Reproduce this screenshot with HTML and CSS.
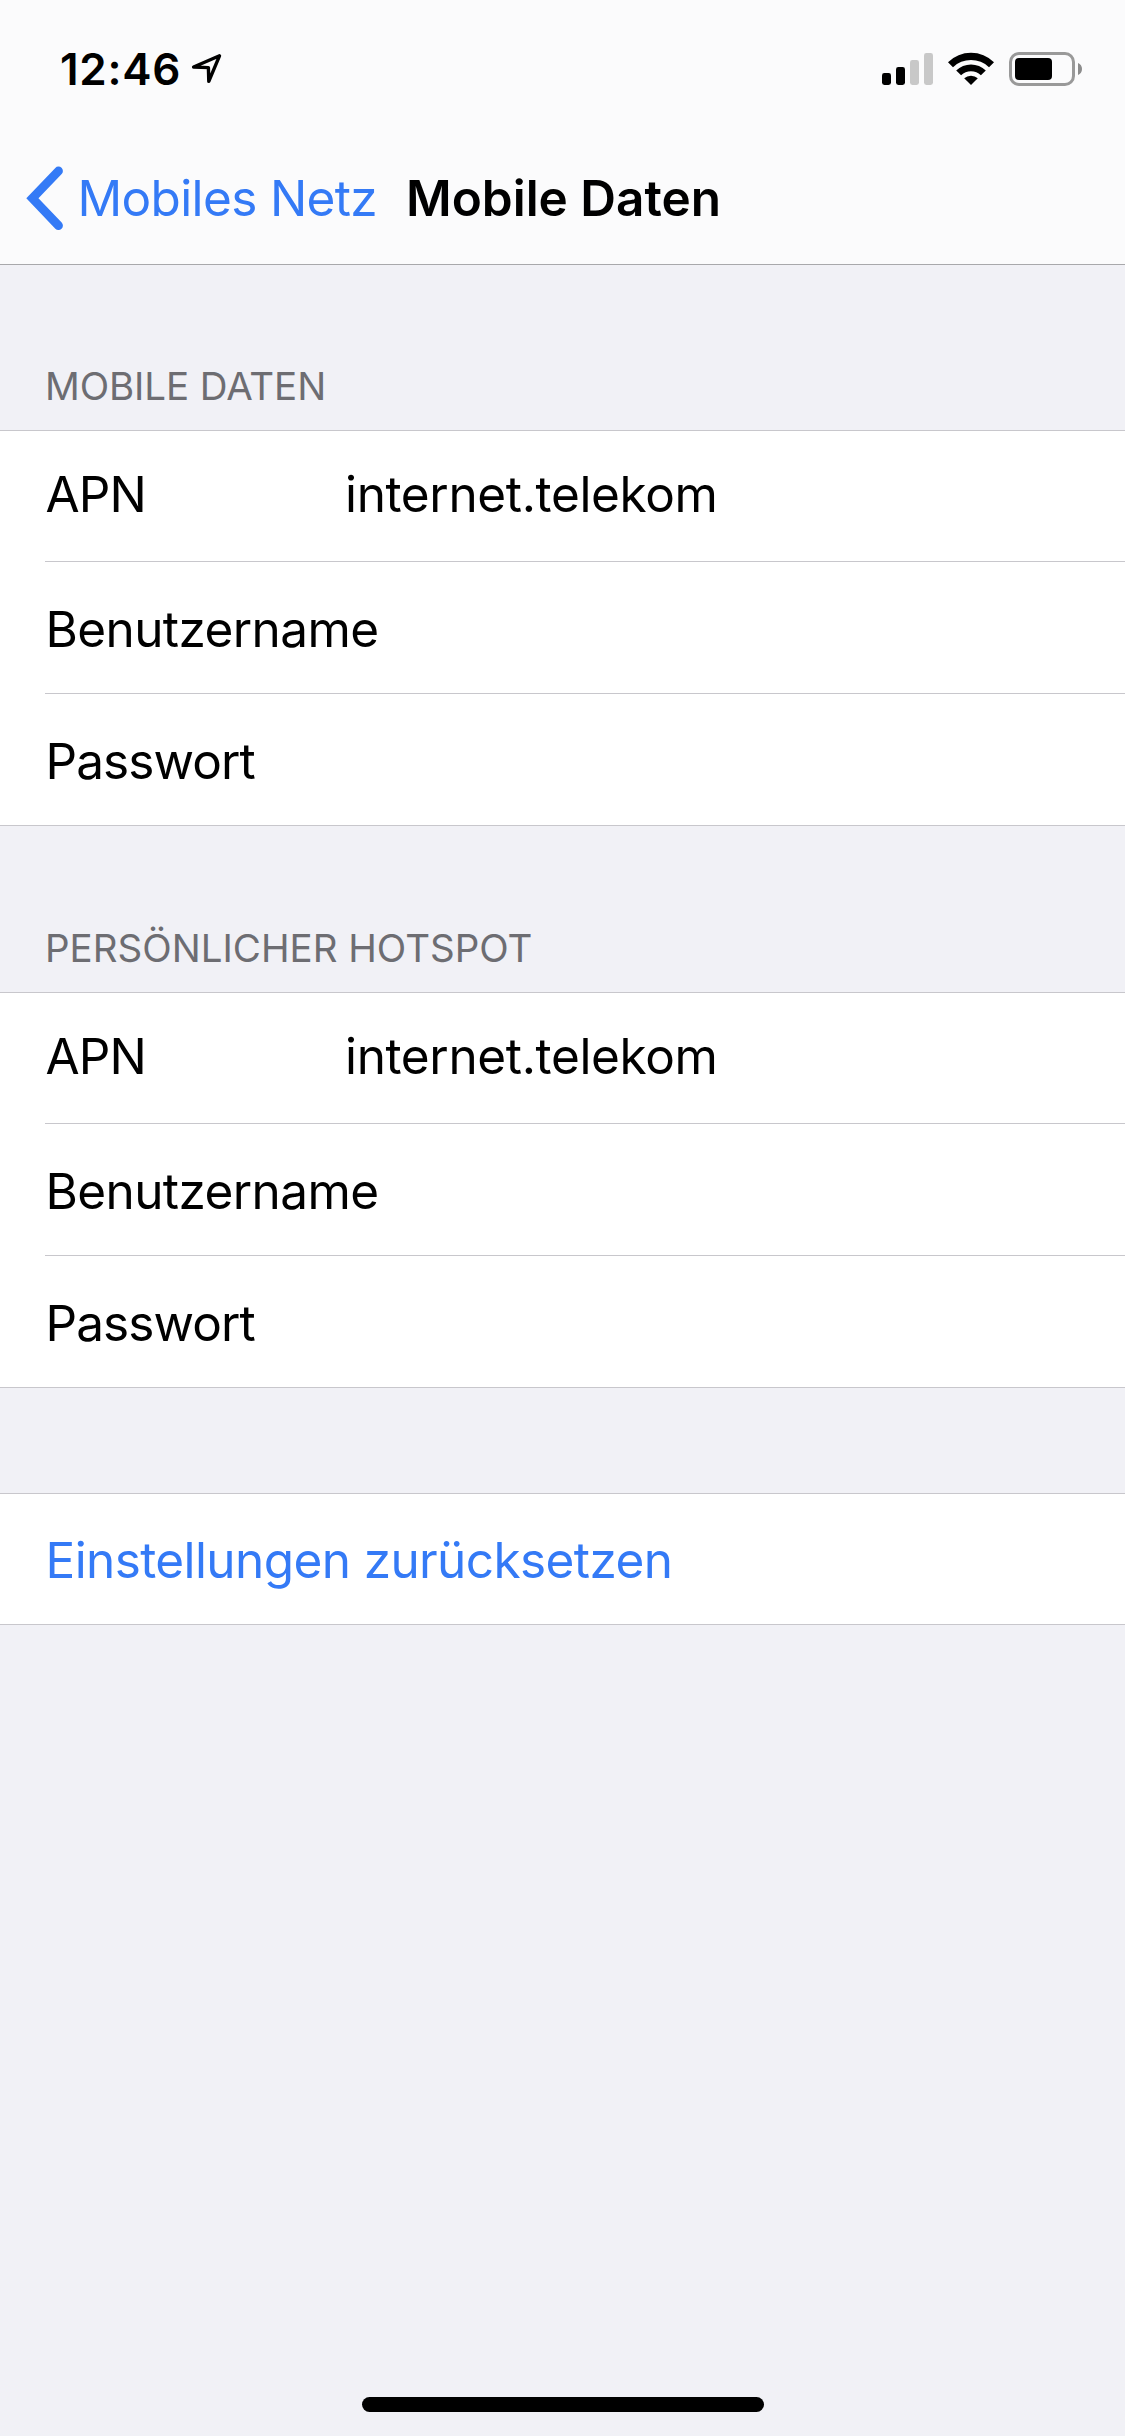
FILE: index.html
```html
<!DOCTYPE html>
<html lang="de">
<head>
<meta charset="utf-8">
<title>Mobile Daten</title>
<link rel="stylesheet" href="styles.css">
</head>
<body>
<div class="screen">
  <header class="topbar">
    <div class="status">
      <div class="status-left">
        <span class="time">12:46</span>
        <svg class="location" width="32" height="32" viewBox="0 0 32 32"><path d="M28.500 2.800 2.600 14 17.400 14.600 17.800 28.400Z" fill="none" stroke="#000" stroke-width="3.400" stroke-linejoin="round"/></svg>
      </div>
      <div class="status-right">
        <svg class="signal" width="51" height="32" viewBox="0 0 51 32">
          <rect x="0" y="20" width="9" height="12" rx="2.4"/>
          <rect x="14" y="14" width="9" height="18" rx="2.4"/>
          <rect x="28" y="7" width="9" height="25" rx="2.4" fill="#c8c8c8"/>
          <rect x="42" y="0" width="9" height="32" rx="2.4" fill="#c8c8c8"/>
        </svg>
        <svg class="wifi" width="46" height="33" viewBox="0 0 46 33">
          <path d="M0 10.2a33 33 0 0 1 46 0L41 15.2a26 26 0 0 0-36 0Z"/>
          <path d="M8.2 18.4a21.2 21.2 0 0 1 29.6 0L32.9 23.3a14.2 14.2 0 0 0-19.8 0Z"/>
          <path d="M16.2 26.3a10 10 0 0 1 13.6 0L23 33Z"/>
        </svg>
        <svg class="battery" width="73" height="34" viewBox="0 0 73 34">
          <rect x="1.5" y="1.5" width="63" height="31" rx="8.5" fill="none" stroke="#999" stroke-width="3"/>
          <rect x="6" y="6" width="37" height="22" rx="4"/>
          <path d="M69 11v12c2.500-.8 4-3.200 4-6s-1.500-5.200-4-6Z" fill="#8c8c8c"/>
        </svg>
      </div>
    </div>
    <nav class="nav">
      <a class="back">
        <svg class="chevron" width="38" height="64" viewBox="0 0 38 64"><path d="M32.500 5 6.400 32.300 32.500 59.600" fill="none" stroke="#347af6" stroke-width="8.800" stroke-linecap="round" stroke-linejoin="miter"/></svg>
        <span class="back-label">Mobiles Netz</span>
      </a>
      <h1 class="title">Mobile Daten</h1>
    </nav>
  </header>
  <main>
    <section>
      <h2 class="heading">MOBILE DATEN</h2>
      <div class="group">
        <div class="row row-first"><span class="label apn">APN</span><span class="value">internet.telekom</span></div>
        <div class="row"><span class="label user">Benutzername</span></div>
        <div class="row"><span class="label pass">Passwort</span></div>
      </div>
    </section>
    <section class="hotspot">
      <h2 class="heading">PERSÖNLICHER HOTSPOT</h2>
      <div class="group">
        <div class="row row-first"><span class="label apn">APN</span><span class="value">internet.telekom</span></div>
        <div class="row"><span class="label user">Benutzername</span></div>
        <div class="row"><span class="label pass">Passwort</span></div>
      </div>
    </section>
    <div class="group reset-group">
      <div class="row row-reset"><a class="reset">Einstellungen zurücksetzen</a></div>
    </div>
  </main>
  <div class="home"></div>
</div>
</body>
</html>
```

FILE: styles.css
```css
* { box-sizing: border-box; }
body { margin: 0; }
.screen {
  display: flex;
  flex-direction: column;
  width: 1125px;
  height: 2436px;
  background: #f1f1f6;
  color: #000;
  font-family: Inter, "Liberation Sans", sans-serif;
  font-size: 49.5px;
  white-space: nowrap;
}
svg { display: block; flex: none; }
h1, h2 { margin: 0; }

.topbar { height: 265px; background: #fbfbfc; border-bottom: 1px solid #a8a8ab; }
.status { display: flex; justify-content: space-between; height: 132px; padding: 0 43px 0 60px; }
.status-left, .status-right { display: flex; align-items: flex-start; }
.time { width: 131px; padding-top: 42px; font-size: 44px; line-height: 54px; font-weight: 600; letter-spacing: .7px; }
.location { margin-top: 53px; }
.signal { margin-top: 53px; }
.wifi { margin: 52px 15px 0; }
.battery { margin-top: 52px; }

.nav { display: flex; align-items: center; height: 132px; padding-left: 26px; line-height: 60px; }
.back { display: flex; align-items: center; width: 380px; color: #347af6; }
.back-label { margin-left: 13.5px; letter-spacing: -.65px; }
.title { font-size: 49.5px; font-weight: 600; }

.heading {
  display: flex;
  align-items: flex-end;
  height: 165px;
  padding: 0 0 20px 45px;
  color: #6d6d72;
  font-size: 38.5px;
  font-weight: 400;
  line-height: 48px;
  letter-spacing: -.1px;
}
.hotspot .heading { height: 166px; letter-spacing: 0; }
.group { padding-left: 45px; background: #fff; border-top: 1px solid #c8c7cc; border-bottom: 1px solid #c8c7cc; }
.row { display: flex; align-items: center; height: 132px; padding-top: 3px; line-height: 60px; }
.row + .row { border-top: 1px solid #c8c7cc; }
.row-first { height: 130px; padding: 0 0 4px; }
.label { width: 300px; padding-left: .5px; }
.apn { letter-spacing: -.9px; }
.user { letter-spacing: -.6px; }
.pass { letter-spacing: -.9px; }
.value { letter-spacing: -.36px; }
.reset-group { margin-top: 105px; }
.row-reset { height: 130px; padding-top: 2px; }
.reset { padding-left: .5px; color: #347af6; letter-spacing: -.6px; }
.home { width: 402px; height: 15px; margin: auto auto 24px 362px; border-radius: 7.5px; background: #000; }
```
